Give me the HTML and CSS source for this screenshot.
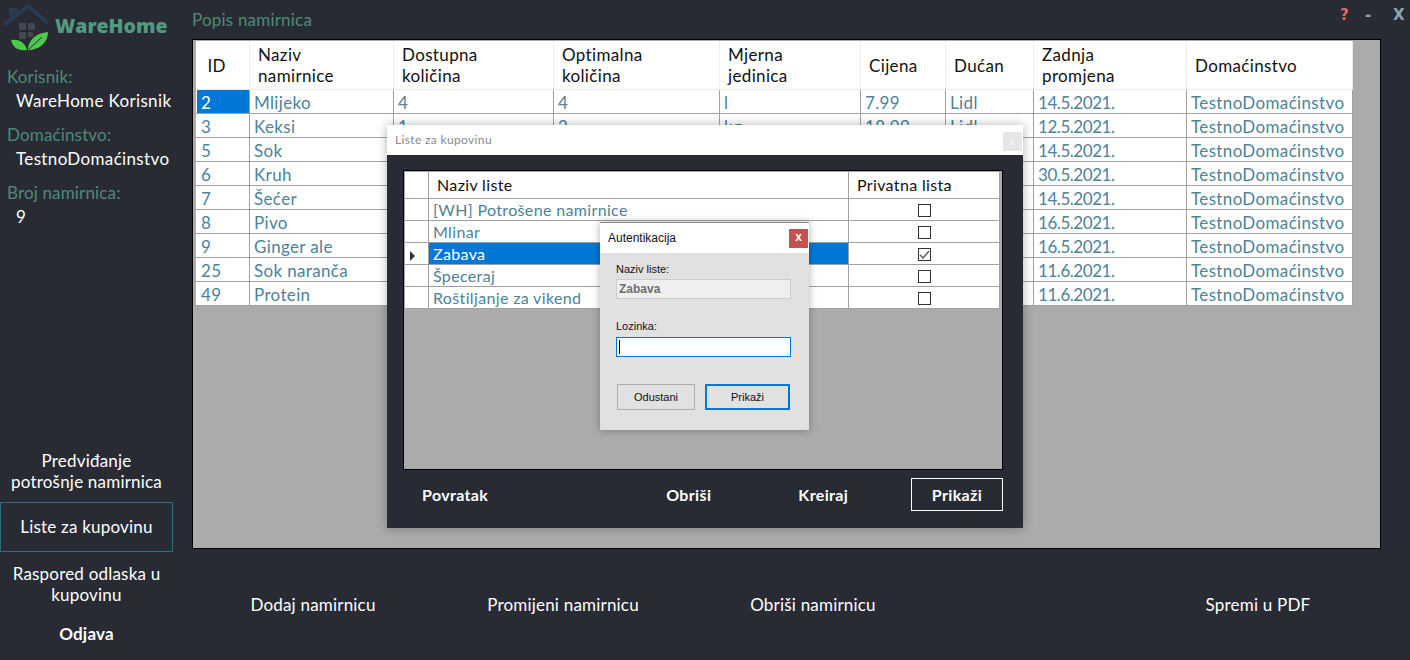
FILE: index.html
```html
<!DOCTYPE html>
<html>
<head>
    <title>WareHome</title>
    <link rel="stylesheet" href="styles.css">
</head>
<body>
<div class="app">
    <div class="sidebar">
        <div class="logo">
            <svg width="56" height="54" viewBox="0 0 56 54">
                <path d="M4 25 L28 6 L48 23 M11 16 V10 h4 v3" fill="none" stroke="#2a3a50" stroke-width="4"/>
                <rect x="19" y="23" width="7" height="7" rx="1" fill="#44474d"/>
                <rect x="28" y="23" width="7" height="7" rx="1" fill="#44474d"/>
                <rect x="19" y="32" width="7" height="7" rx="1" fill="#44474d"/>
                <rect x="28" y="32" width="5" height="5" rx="1" fill="#44474d"/>
                <path d="M11 40 C18 39 25 42 27 50 C18 51 13 48 11 40 Z" fill="#4fc94a"/>
                <path d="M28 50 C28 40 36 33 48 32 C48 42 40 50 28 50 Z" fill="#4fc94a"/>
                <path d="M29 49 L42 37" stroke="#282b33" stroke-width="1"/>
            </svg>
            <span class="logo-text">WareHome</span>
        </div>
        <div class="info">
            <div class="info-label">Korisnik:</div>
            <div class="info-value">WareHome Korisnik</div>
            <div class="info-label">Domaćinstvo:</div>
            <div class="info-value">TestnoDomaćinstvo</div>
            <div class="info-label">Broj namirnica:</div>
            <div class="info-value">9</div>
        </div>
        <div class="menu">
            <a class="menu-item">Predviđanje<br>potrošnje namirnica</a>
            <a class="menu-item active">Liste za kupovinu</a>
            <a class="menu-item">Raspored odlaska u<br>kupovinu</a>
            <a class="menu-item logout">Odjava</a>
        </div>
    </div>

    <div class="main">
        <div class="topbar">
            <span class="page-title">Popis namirnica</span>
            <div class="window-btns">
                <span class="help">?</span>
                <span class="min">-</span>
                <span class="close">X</span>
            </div>
        </div>
        <div class="panel">
            <table class="grid">
                <colgroup>
                    <col style="width:53px"><col style="width:144px"><col style="width:160px"><col style="width:166px"><col style="width:141px">
                    <col style="width:85px"><col style="width:88px"><col style="width:153px"><col style="width:166px">
                </colgroup>
                <thead>
                    <tr>
                        <th class="id-head">ID</th><th>Naziv<br>namirnice</th><th>Dostupna<br>količina</th><th>Optimalna<br>količina</th><th>Mjerna<br>jedinica</th>
                        <th>Cijena</th><th>Dućan</th><th>Zadnja<br>promjena</th><th>Domaćinstvo</th>
                    </tr>
                </thead>
                <tbody>
                    <tr><td class="sel">2</td><td>Mlijeko</td><td>4</td><td>4</td><td>l</td><td>7.99</td><td>Lidl</td><td class="date">14.5.2021.</td><td>TestnoDomaćinstvo</td></tr>
                    <tr><td>3</td><td>Keksi</td><td>1</td><td>2</td><td>kg</td><td>18.99</td><td>Lidl</td><td class="date">12.5.2021.</td><td>TestnoDomaćinstvo</td></tr>
                    <tr><td>5</td><td>Sok</td><td></td><td></td><td></td><td></td><td></td><td class="date">14.5.2021.</td><td>TestnoDomaćinstvo</td></tr>
                    <tr><td>6</td><td>Kruh</td><td></td><td></td><td></td><td></td><td></td><td class="date">30.5.2021.</td><td>TestnoDomaćinstvo</td></tr>
                    <tr><td>7</td><td>Šećer</td><td></td><td></td><td></td><td></td><td></td><td class="date">14.5.2021.</td><td>TestnoDomaćinstvo</td></tr>
                    <tr><td>8</td><td>Pivo</td><td></td><td></td><td></td><td></td><td></td><td class="date">16.5.2021.</td><td>TestnoDomaćinstvo</td></tr>
                    <tr><td>9</td><td>Ginger ale</td><td></td><td></td><td></td><td></td><td></td><td class="date">16.5.2021.</td><td>TestnoDomaćinstvo</td></tr>
                    <tr><td>25</td><td>Sok naranča</td><td></td><td></td><td></td><td></td><td></td><td class="date">11.6.2021.</td><td>TestnoDomaćinstvo</td></tr>
                    <tr><td>49</td><td>Protein</td><td></td><td></td><td></td><td></td><td></td><td class="date">11.6.2021.</td><td>TestnoDomaćinstvo</td></tr>
                </tbody>
            </table>
        </div>
        <div class="actions">
            <a>Dodaj namirnicu</a>
            <a>Promijeni namirnicu</a>
            <a>Obriši namirnicu</a>
            <a class="pdf">Spremi u PDF</a>
        </div>
    </div>
</div>

<div class="lists-window">
    <div class="lists-title">
        <span>Liste za kupovinu</span>
        <span class="lists-x">x</span>
    </div>
    <div class="lists-body">
        <div class="lists-panel">
            <table class="grid list-grid">
                <colgroup>
                    <col style="width:23px"><col style="width:420px"><col style="width:151px">
                </colgroup>
                <thead>
                    <tr><th></th><th>Naziv liste</th><th>Privatna lista</th></tr>
                </thead>
                <tbody>
                    <tr><td></td><td>[WH] Potrošene namirnice</td><td class="check"><span class="box"></span></td></tr>
                    <tr><td></td><td>Mlinar</td><td class="check"><span class="box"></span></td></tr>
                    <tr>
                        <td class="arrow"><span class="pointer"></span></td><td class="sel">Zabava</td>
                        <td class="check">
                            <span class="box">
                                <svg width="11" height="11" viewBox="0 0 11 11"><path d="M1 6 L4 9 L10 2" fill="none" stroke="#555" stroke-width="1.3"/></svg>
                            </span>
                        </td>
                    </tr>
                    <tr><td></td><td>Špeceraj</td><td class="check"><span class="box"></span></td></tr>
                    <tr><td></td><td>Roštiljanje za vikend</td><td class="check"><span class="box"></span></td></tr>
                </tbody>
            </table>
        </div>
        <div class="lists-actions">
            <a class="back">Povratak</a>
            <a class="del">Obriši</a>
            <a class="create">Kreiraj</a>
            <a class="show">Prikaži</a>
        </div>
    </div>
</div>

<div class="auth-window">
    <div class="auth-title">
        <span>Autentikacija</span>
        <span class="auth-x">x</span>
    </div>
    <div class="auth-body">
        <label>Naziv liste:</label>
        <div class="auth-input readonly">Zabava</div>
        <label class="pass-label">Lozinka:</label>
        <div class="auth-input focus"><span class="caret"></span></div>
        <div class="auth-btns">
            <button class="cancel">Odustani</button>
            <button class="ok">Prikaži</button>
        </div>
    </div>
</div>
</body>
</html>
```

FILE: styles.css
```css
body {
    margin: 0;
    padding: 0;
    background-color: #282b33;
    font-family: Lato, "Open Sans", Arial, sans-serif;
    font-size: 17px;
    letter-spacing: 0.35px;
    color: #fff;
    overflow: hidden;
}

.app {
    display: flex;
    width: 1410px;
    height: 660px;
}

/* left column */
.sidebar {
    width: 192px;
    height: 660px;
    flex-shrink: 0;
    display: flex;
    flex-direction: column;
}

.logo {
    display: flex;
    align-items: center;
    height: 54px;
}

.logo-text {
    font-family: "Open Sans", sans-serif;
    font-weight: 800;
    font-size: 19.5px;
    letter-spacing: 0;
    color: #519a80;
    margin-left: -1px;
    margin-top: -3px;
}

.info {
    margin-top: 12px;
}

.info-label {
    color: #4f8a78;
    padding-left: 7px;
    height: 22px;
    line-height: 22px;
    letter-spacing: 0.15px;
}

.info-value {
    padding-left: 16px;
    height: 36px;
    line-height: 26px;
}

.menu {
    margin-top: auto;
    width: 173px;
    padding-bottom: 16px;
    display: flex;
    flex-direction: column;
    align-items: center;
    text-align: center;
    letter-spacing: 0.2px;
}

.menu-item {
    display: block;
    line-height: 21px;
    width: 100%;
    box-sizing: border-box;
    padding: 0;
    white-space: nowrap;
}

.menu-item.active {
    border: 1px solid #2d6f7f;
    height: 50px;
    line-height: 48px;
    margin: 10px 0 11px;
}

.logout {
    font-weight: bold;
    margin-top: 18px;
}

/* main area */
.main {
    flex: 1;
    display: flex;
    flex-direction: column;
}

.topbar {
    height: 39px;
    display: flex;
    justify-content: space-between;
}

.page-title {
    color: #4f8a78;
    line-height: 40px;
    letter-spacing: 0.2px;
}

.window-btns {
    display: flex;
    font-family: "DejaVu Sans", sans-serif;
    font-weight: bold;
    font-size: 15px;
    line-height: 30px;
}

.help {
    color: #e0686c;
    width: 25px;
}

.min {
    color: #a0a4a8;
    width: 28px;
}

.close {
    color: #8ea4b4;
    width: 17px;
}

.panel {
    width: 1189px;
    height: 510px;
    box-sizing: border-box;
    background-color: #ababab;
    border: 1px solid #000;
    padding: 1px 0 0 3px;
}

.actions {
    display: flex;
    padding-top: 45px;
    letter-spacing: 0.2px;
}

.actions a {
    width: 250px;
    text-align: center;
    line-height: 22px;
}

.actions a:first-child {
    margin-left: -4px;
}

.actions a.pdf {
    margin-left: 195px;
}

/* tables */
.grid {
    border-collapse: collapse;
    table-layout: fixed;
    width: 1156px;
    background-color: #fff;
    color: #4d8299;
}

.grid th {
    height: 48px;
    padding: 0 0 0 8px;
    font-weight: normal;
    text-align: left;
    color: #111;
    line-height: 21px;
    border-right: 1px solid #ececec;
    border-bottom: 1px solid #ececec;
}

.grid th.id-head {
    padding-left: 11px;
}

.grid td {
    height: 21px;
    padding: 2px 0 0 4px;
    line-height: 21px;
    border: 1px solid #a0a0a0;
    border-top: 0;
    border-left: 0;
    white-space: nowrap;
}

.grid td:first-child {
    border-left: 1px solid #fff;
}

.grid td.date {
    letter-spacing: -0.45px;
}

.grid td.sel {
    background-color: #0078d7;
    color: #fff;
}

/* Liste za kupovinu window */
.lists-window {
    position: absolute;
    left: 387px;
    top: 125px;
    width: 636px;
    height: 403px;
    box-shadow: 0 0 10px rgba(0, 0, 0, 0.3);
    display: flex;
    flex-direction: column;
}

.lists-title {
    height: 30px;
    background-color: #fff;
    color: #8a8a8a;
    font-size: 12px;
    line-height: 30px;
    padding-left: 8px;
    display: flex;
    justify-content: space-between;
}

.lists-x {
    width: 19px;
    height: 19px;
    margin: 7px 1px 0 0;
    background-color: #e6e6e6;
    color: #f4f4f4;
    line-height: 17px;
    text-align: center;
    font-weight: bold;
}

.lists-body {
    flex: 1;
    background-color: #282b33;
    padding: 15px 20px 0 16px;
}

.lists-panel {
    height: 300px;
    box-sizing: border-box;
    background-color: #ababab;
    border: 1px solid #000;
    padding: 1px 0 0 1px;
}

.list-grid {
    width: 594px;
    font-size: 16px;
}

.list-grid th {
    height: 24px;
    padding: 0 0 2px 8px;
    border-right: 1px solid #a0a0a0;
    border-bottom: 1px solid #a0a0a0;
}

.list-grid td {
    height: 21px;
    padding-top: 0;
    line-height: 21px;
}

.list-grid td.arrow {
    padding: 0;
    text-align: center;
}

.pointer {
    display: inline-block;
    width: 0;
    height: 0;
    border-left: 5px solid #333;
    border-top: 5px solid transparent;
    border-bottom: 5px solid transparent;
    margin-right: 10px;
    vertical-align: middle;
}

.list-grid td.check {
    padding: 0;
    text-align: center;
}

.box {
    display: inline-flex;
    align-items: center;
    justify-content: center;
    width: 11px;
    height: 11px;
    margin-bottom: 3px;
    border: 1px solid #333;
    vertical-align: middle;
}

.lists-actions {
    display: flex;
    align-items: center;
    height: 33px;
    margin-top: 8px;
    font-size: 16px;
    font-weight: bold;
}

.back {
    margin-left: 19px;
}

.del {
    margin-left: 178px;
}

.create {
    margin-left: 87px;
}

.show {
    margin-left: auto;
    width: 90px;
    height: 31px;
    line-height: 31px;
    text-align: center;
    border: 1px solid #fff;
}

/* Autentikacija dialog */
.auth-window {
    position: absolute;
    left: 600px;
    top: 222px;
    width: 209px;
    height: 208px;
    background-color: #e1e1e1;
    border-top: 1px solid #8a8a8a;
    box-sizing: border-box;
    box-shadow: 0 0 8px rgba(0, 0, 0, 0.3);
    font-family: "Liberation Sans", Arial, sans-serif;
    font-size: 11px;
    letter-spacing: 0;
    color: #111;
}

.auth-title {
    height: 30px;
    background-color: #fff;
    display: flex;
    justify-content: space-between;
    align-items: center;
    padding: 0 1px 0 8px;
    font-size: 12px;
}

.auth-x {
    width: 19px;
    height: 19px;
    background-color: #c75050;
    color: #fff;
    font-weight: bold;
    text-align: center;
    line-height: 17px;
}

.auth-body {
    padding: 9px 18px 0 16px;
}

.auth-body label {
    display: block;
    height: 17px;
    line-height: 14px;
}

.auth-body .pass-label {
    margin-top: 20px;
    height: 18px;
}

.auth-input {
    height: 20px;
    box-sizing: border-box;
    padding-left: 2px;
    line-height: 19px;
}

.readonly {
    background-color: #efefef;
    border: 1px solid #ccc;
    color: #6d6d6d;
    font-weight: bold;
    font-size: 12px;
}

.focus {
    background-color: #fff;
    border: 1px solid #0078d7;
}

.caret {
    display: inline-block;
    width: 1px;
    height: 14px;
    background-color: #000;
    margin-top: 2px;
}

.auth-btns {
    display: flex;
    margin: 27px 0 0 1px;
}

.auth-btns button {
    height: 26px;
    font-family: "Liberation Sans", Arial, sans-serif;
    font-size: 11px;
    color: #111;
    background-color: #e1e1e1;
    padding: 0;
}

.cancel {
    width: 78px;
    border: 1px solid #adadad;
}

.ok {
    width: 85px;
    margin-left: 10px;
    border: 2px solid #0078d7;
}
```
